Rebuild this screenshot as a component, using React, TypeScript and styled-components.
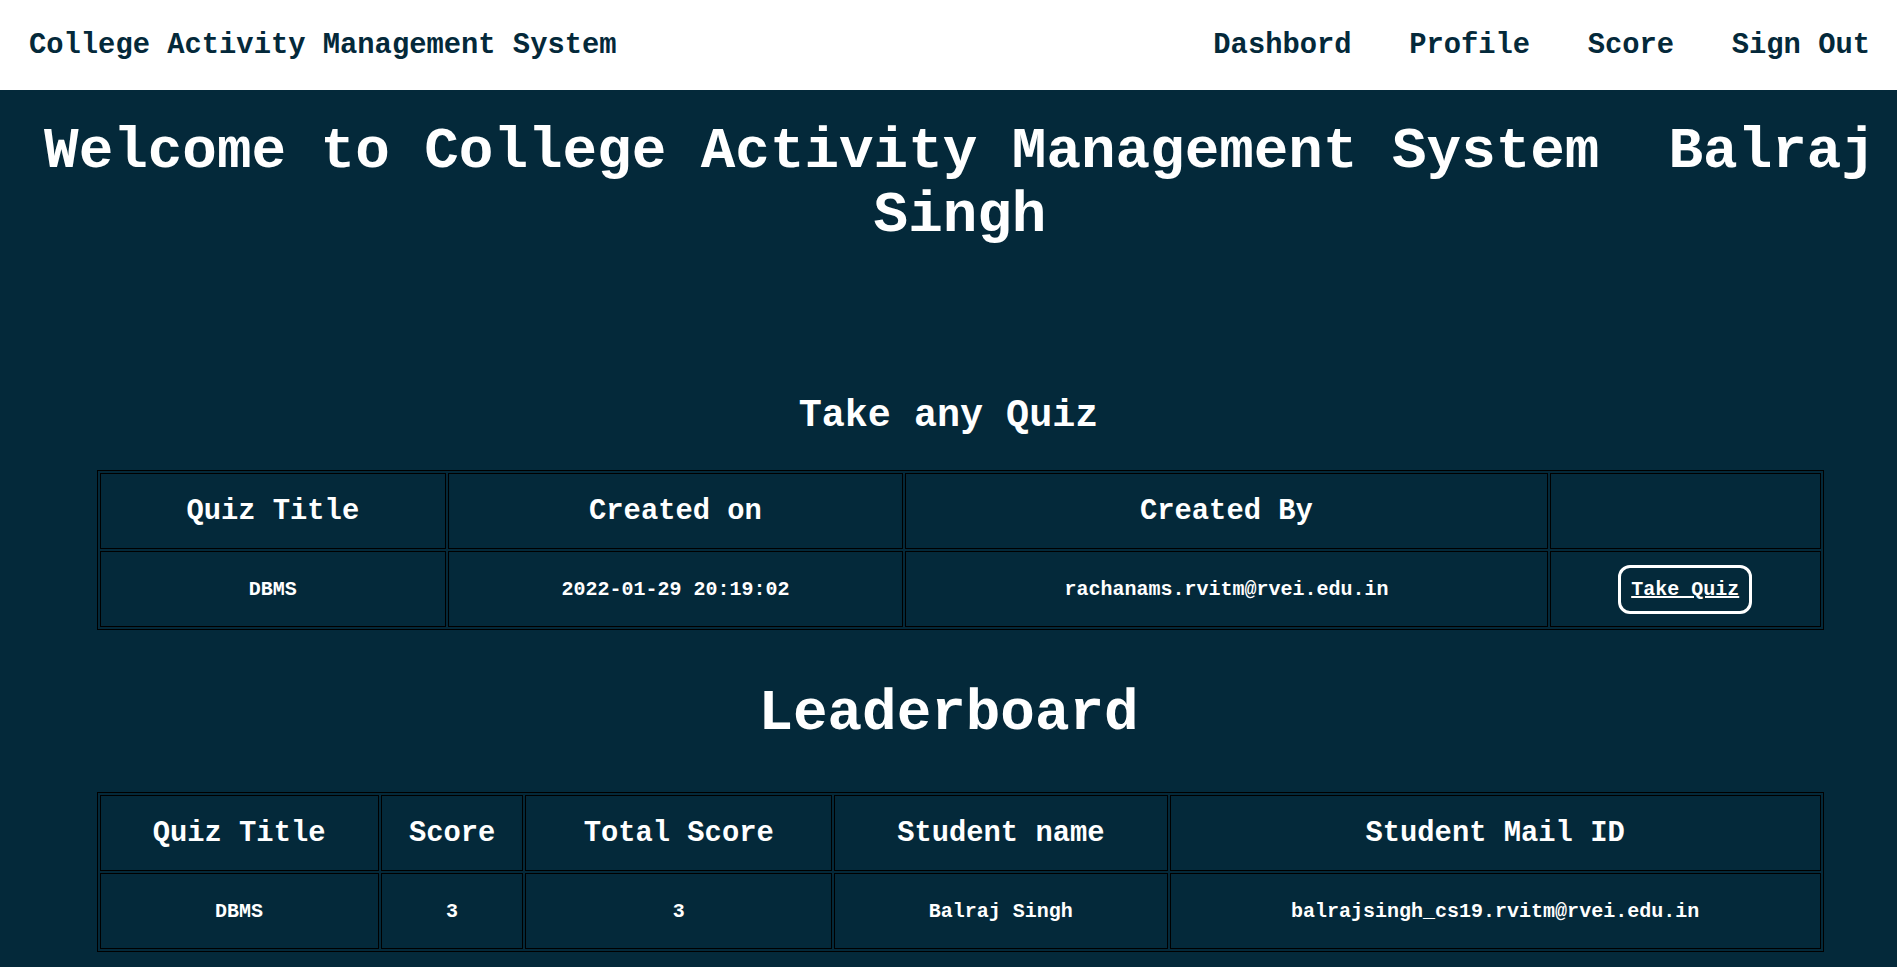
import React from 'react'
import styled, { createGlobalStyle } from 'styled-components'

const GlobalStyle = createGlobalStyle`
  html, body {
    margin: 0;
    padding: 0;
    background: #04293a;
  }
  body {
    font-family: 'Liberation Mono', 'Courier New', monospace;
    font-weight: bold;
    color: #ffffff;
  }
`

const NavBar = styled.nav`
  height: 90px;
  background: #ffffff;
  display: flex;
  align-items: center;
  justify-content: space-between;
  padding: 1px 27px 0 29px;
  box-sizing: border-box;
  color: #04293a;
  font-size: 28.8px;
`

const Brand = styled.div`
  white-space: nowrap;
`

const NavLinks = styled.div`
  display: flex;
  gap: 57.6px;
`

const NavLink = styled.a`
  color: inherit;
  text-decoration: none;
  white-space: nowrap;
  cursor: pointer;
`

const Welcome = styled.h1`
  margin: 30px 0 0;
  padding-left: 23px;
  font-size: 57.6px;
  line-height: 64px;
  text-align: center;
`

const SectionTitle = styled.h2<{ size: number; top: number; bottom: number }>`
  margin: ${(p) => p.top}px 0 ${(p) => p.bottom}px;
  font-size: ${(p) => p.size}px;
  text-align: center;
`

const TableWrap = styled.div`
  padding-left: 23px;
`

const Table = styled.table`
  width: 1727px;
  margin: 0 auto;
  border: 1px solid #000;
  border-spacing: 2px;
`

const Th = styled.th`
  border: 1px solid #000;
  padding: 1px;
  height: 76px;
  box-sizing: border-box;
  font-size: 28.8px;
  text-align: center;
`

const Td = styled.td`
  border: 1px solid #000;
  padding: 1px;
  height: 76px;
  box-sizing: border-box;
  font-size: 20px;
  text-align: center;
`

const QuizButton = styled.a`
  display: inline-block;
  padding: 10px;
  border: 3px solid #ffffff;
  border-radius: 12px;
  color: #ffffff;
  text-decoration: underline;
  cursor: pointer;
`

const quizzes = [
  {
    title: 'DBMS',
    created: '2022-01-29 20:19:02',
    by: 'rachanams.rvitm@rvei.edu.in',
  },
]

const scores = [
  {
    title: 'DBMS',
    score: 3,
    total: 3,
    name: 'Balraj Singh',
    mail: 'balrajsingh_cs19.rvitm@rvei.edu.in',
  },
]

export default function App() {
  const student = 'Balraj Singh'

  return (
    <>
      <GlobalStyle />
      <NavBar>
        <Brand>College Activity Management System</Brand>
        <NavLinks>
          <NavLink>Dashbord</NavLink>
          <NavLink>Profile</NavLink>
          <NavLink>Score</NavLink>
          <NavLink>Sign Out</NavLink>
        </NavLinks>
      </NavBar>

      <Welcome>
        {`Welcome to College Activity Management System\u00a0 ${student}`}
      </Welcome>

      <SectionTitle size={38.4} top={146} bottom={32}>
        Take any Quiz
      </SectionTitle>
      <TableWrap>
        <Table>
          <thead>
            <tr>
              <Th>Quiz Title</Th>
              <Th>Created on</Th>
              <Th>Created By</Th>
              <Th></Th>
            </tr>
          </thead>
          <tbody>
            {quizzes.map((q) => (
              <tr key={q.title}>
                <Td>{q.title}</Td>
                <Td>{q.created}</Td>
                <Td>{q.by}</Td>
                <Td>
                  <QuizButton>Take Quiz</QuizButton>
                </Td>
              </tr>
            ))}
          </tbody>
        </Table>
      </TableWrap>

      <SectionTitle size={57.6} top={51} bottom={46}>
        Leaderboard
      </SectionTitle>
      <TableWrap>
        <Table>
          <thead>
            <tr>
              <Th>Quiz Title</Th>
              <Th>Score</Th>
              <Th>Total Score</Th>
              <Th>Student name</Th>
              <Th>Student Mail ID</Th>
            </tr>
          </thead>
          <tbody>
            {scores.map((s) => (
              <tr key={s.mail}>
                <Td>{s.title}</Td>
                <Td>{s.score}</Td>
                <Td>{s.total}</Td>
                <Td>{s.name}</Td>
                <Td>{s.mail}</Td>
              </tr>
            ))}
          </tbody>
        </Table>
      </TableWrap>
    </>
  )
}
